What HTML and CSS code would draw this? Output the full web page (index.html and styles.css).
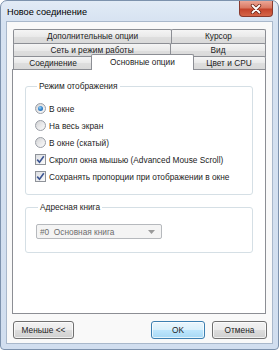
FILE: index.html
```html
<!DOCTYPE html>
<html>
<head>
<meta charset="utf-8">
<link rel="stylesheet" href="styles.css">
</head>
<body>
<div class="window">
  <div class="titlebar">
    <span class="title">Новое соединение</span>
    <div class="close">
      <svg width="12" height="10" viewBox="0 0 12 10">
        <path d="M2.5 1.5 L9.5 8.5 M9.5 1.5 L2.5 8.5" stroke="#6b2418" stroke-width="3.4" stroke-linecap="round"/>
        <path d="M2.5 1.5 L9.5 8.5 M9.5 1.5 L2.5 8.5" stroke="#ffffff" stroke-width="1.8" stroke-linecap="round"/>
      </svg>
    </div>
  </div>
  <div class="client">
    <div class="tabctl">
      <div class="tabrow r1">
        <div class="tab w1">Дополнительные опции</div>
        <div class="tab rest">Курсор</div>
      </div>
      <div class="tabrow r2">
        <div class="tab w2">Сеть и режим работы</div>
        <div class="tab rest">Вид</div>
      </div>
      <div class="tabrow front">
        <div class="tab w3">Соединение</div>
        <div class="tab sel">Основные опции</div>
        <div class="tab rest last">Цвет и CPU</div>
      </div>
      <div class="panel">
        <fieldset class="group g1">
          <legend>Режим отображения</legend>
          <div class="opt"><span class="radio on"></span><span>В окне</span></div>
          <div class="opt"><span class="radio"></span><span>На весь экран</span></div>
          <div class="opt"><span class="radio"></span><span>В окне (скатый)</span></div>
          <div class="opt"><span class="check"><svg width="9" height="9" viewBox="0 0 9 9"><path d="M1.2 4.6 L3.5 7.2 L7.8 1.2" fill="none" stroke="#3c5592" stroke-width="1.6"/></svg></span><span>Скролл окна мышью (Advanced Mouse Scroll)</span></div>
          <div class="opt"><span class="check"><svg width="9" height="9" viewBox="0 0 9 9"><path d="M1.2 4.6 L3.5 7.2 L7.8 1.2" fill="none" stroke="#3c5592" stroke-width="1.6"/></svg></span><span>Сохранять пропорции при отображении в окне</span></div>
        </fieldset>
        <fieldset class="group g2">
          <legend>Адресная книга</legend>
          <div class="combo">
            <span>#0&nbsp;&nbsp;Основная книга</span>
            <svg width="7" height="4" viewBox="0 0 7 4"><path d="M0 0 H7 L3.5 4 Z" fill="#9a9a9a"/></svg>
          </div>
        </fieldset>
      </div>
    </div>
    <div class="buttons">
      <div class="btn less">Меньше &lt;&lt;</div>
      <div class="btn ok">OK</div>
      <div class="btn cancel">Отмена</div>
    </div>
  </div>
</div>
</body>
</html>
```

FILE: styles.css
```css
html, body {
  margin: 0;
  padding: 0;
}
body {
  width: 279px;
  height: 350px;
  background: #ffffff;
  font-family: "Liberation Sans", Arial, sans-serif;
  font-size: 8.3px;
  color: #1c1c1c;
}
.window {
  box-sizing: border-box;
  width: 279px;
  height: 350px;
  border: 1px solid #7d92ad;
  border-radius: 7px 7px 4px 4px;
  background: linear-gradient(to bottom, #e2ebf6 0px, #d6e2f1 22px, #d1deef 100%);
  display: flex;
  flex-direction: column;
}
.titlebar {
  height: 20px;
  display: flex;
  align-items: flex-start;
  padding-left: 6px;
  flex-shrink: 0;
}
.title {
  font-size: 9.2px;
  padding-top: 6px;
  color: #000;
}
.close {
  margin-left: auto;
  margin-right: 5px;
  width: 34px;
  height: 16px;
  box-sizing: border-box;
  border: 1px solid #8a3a2e;
  border-top: none;
  border-radius: 0 0 4px 4px;
  background: linear-gradient(to bottom, #eca696 0%, #da7963 45%, #c4442c 55%, #d56649 100%);
  display: flex;
  align-items: center;
  justify-content: center;
}
.client {
  box-sizing: border-box;
  margin: 0 5px 5px 5px;
  flex: 1;
  border: 1px solid #a9b8cb;
  background: #f9f9f9;
  padding: 7px 5px 0 5px;
  display: flex;
  flex-direction: column;
}
.tabctl {
  width: 254px;
  display: flex;
  flex-direction: column;
}
.tabrow {
  display: flex;
  padding-left: 1px;
}
.tabrow.r1 { height: 14px; }
.tabrow.r2 { height: 13px; }
.tabrow.front {
  height: 13px;
  position: relative;
  z-index: 1;
}
.tab {
  box-sizing: border-box;
  border: 1px solid #8c8e94;
  border-bottom: none;
  border-radius: 2px 2px 0 0;
  background: linear-gradient(to bottom, #f5f5f5, #e9e9e9 50%, #dedede 51%, #d9d9d9);
  text-align: center;
  white-space: nowrap;
}
.r1 .tab { height: 15px; line-height: 13px; }
.r2 .tab { height: 14px; line-height: 12px; }
.front .tab {
  height: 13px;
  line-height: 12px;
}
.w1 { width: 159px; }
.w2 { width: 158px; }
.w3 { width: 80px; }
.rest {
  flex: 1;
  margin-left: -1px;
}
.front .tab.sel {
  width: 103px;
  height: 16px;
  margin-top: -2px;
  margin-left: -2px;
  margin-right: -2px;
  background: #ffffff;
  line-height: 14px;
  position: relative;
  z-index: 2;
}
.tab.last {
  margin-left: 0;
}
.panel {
  box-sizing: border-box;
  width: 254px;
  height: 245px;
  border: 1px solid #8c8e94;
  background: #ffffff;
  padding: 10px 12px 0 12px;
}
.group {
  margin: 0;
  padding: 0;
  border: 1px solid #d5dfe5;
  border-radius: 3px;
  min-width: 0;
}
.group legend {
  padding: 0 2px;
  margin-left: 2px;
  line-height: 12px;
  color: #1e1e1e;
}
.g1 {
  padding: 8px 0 9px 9px;
}
.opt {
  display: flex;
  align-items: center;
  height: 17px;
  white-space: nowrap;
}
.radio {
  box-sizing: border-box;
  width: 11px;
  height: 11px;
  border-radius: 50%;
  border: 1px solid #9a9ea6;
  background: linear-gradient(135deg, #cfd0d2 0%, #e9e9ea 50%, #fbfbfb 100%);
  margin-right: 3px;
  flex-shrink: 0;
  display: flex;
  align-items: center;
  justify-content: center;
}
.radio.on::after {
  content: "";
  width: 5px;
  height: 5px;
  border-radius: 50%;
  background: radial-gradient(circle at 40% 35%, #9ad3f7 0, #3a8ad0 45%, #17589f 100%);
}
.check {
  box-sizing: border-box;
  width: 11px;
  height: 11px;
  border: 1px solid #8f9399;
  background: linear-gradient(135deg, #dcdee2, #fbfbfb);
  margin-right: 3px;
  flex-shrink: 0;
  display: flex;
  align-items: center;
  justify-content: center;
}
.g2 {
  margin-top: 6px;
  padding: 11px 0 13px 10px;
}
.combo {
  box-sizing: border-box;
  width: 126px;
  height: 15px;
  border: 1px solid #b6b9bd;
  border-radius: 2px;
  background: #f4f4f4;
  color: #6d6d6d;
  display: flex;
  align-items: center;
  justify-content: space-between;
  padding: 0 6px 0 3px;
}
.buttons {
  display: flex;
  margin-top: 7px;
  padding-left: 1px;
}
.btn {
  box-sizing: border-box;
  height: 18px;
  border: 1px solid #707070;
  border-radius: 3px;
  background: linear-gradient(to bottom, #f2f2f2 0%, #ebebeb 50%, #dddddd 51%, #cfcfcf 100%);
  display: flex;
  align-items: center;
  justify-content: center;
  box-shadow: inset 0 0 0 1px rgba(255,255,255,0.7);
}
.less {
  width: 61px;
}
.ok {
  width: 54px;
  margin-left: auto;
  border-color: #3c7fb1;
  background: linear-gradient(to bottom, #eaf6fd 0%, #d9f0fc 50%, #bee6fd 51%, #a7d9f5 100%);
}
.cancel {
  width: 55px;
  margin-left: 7px;
}
```
